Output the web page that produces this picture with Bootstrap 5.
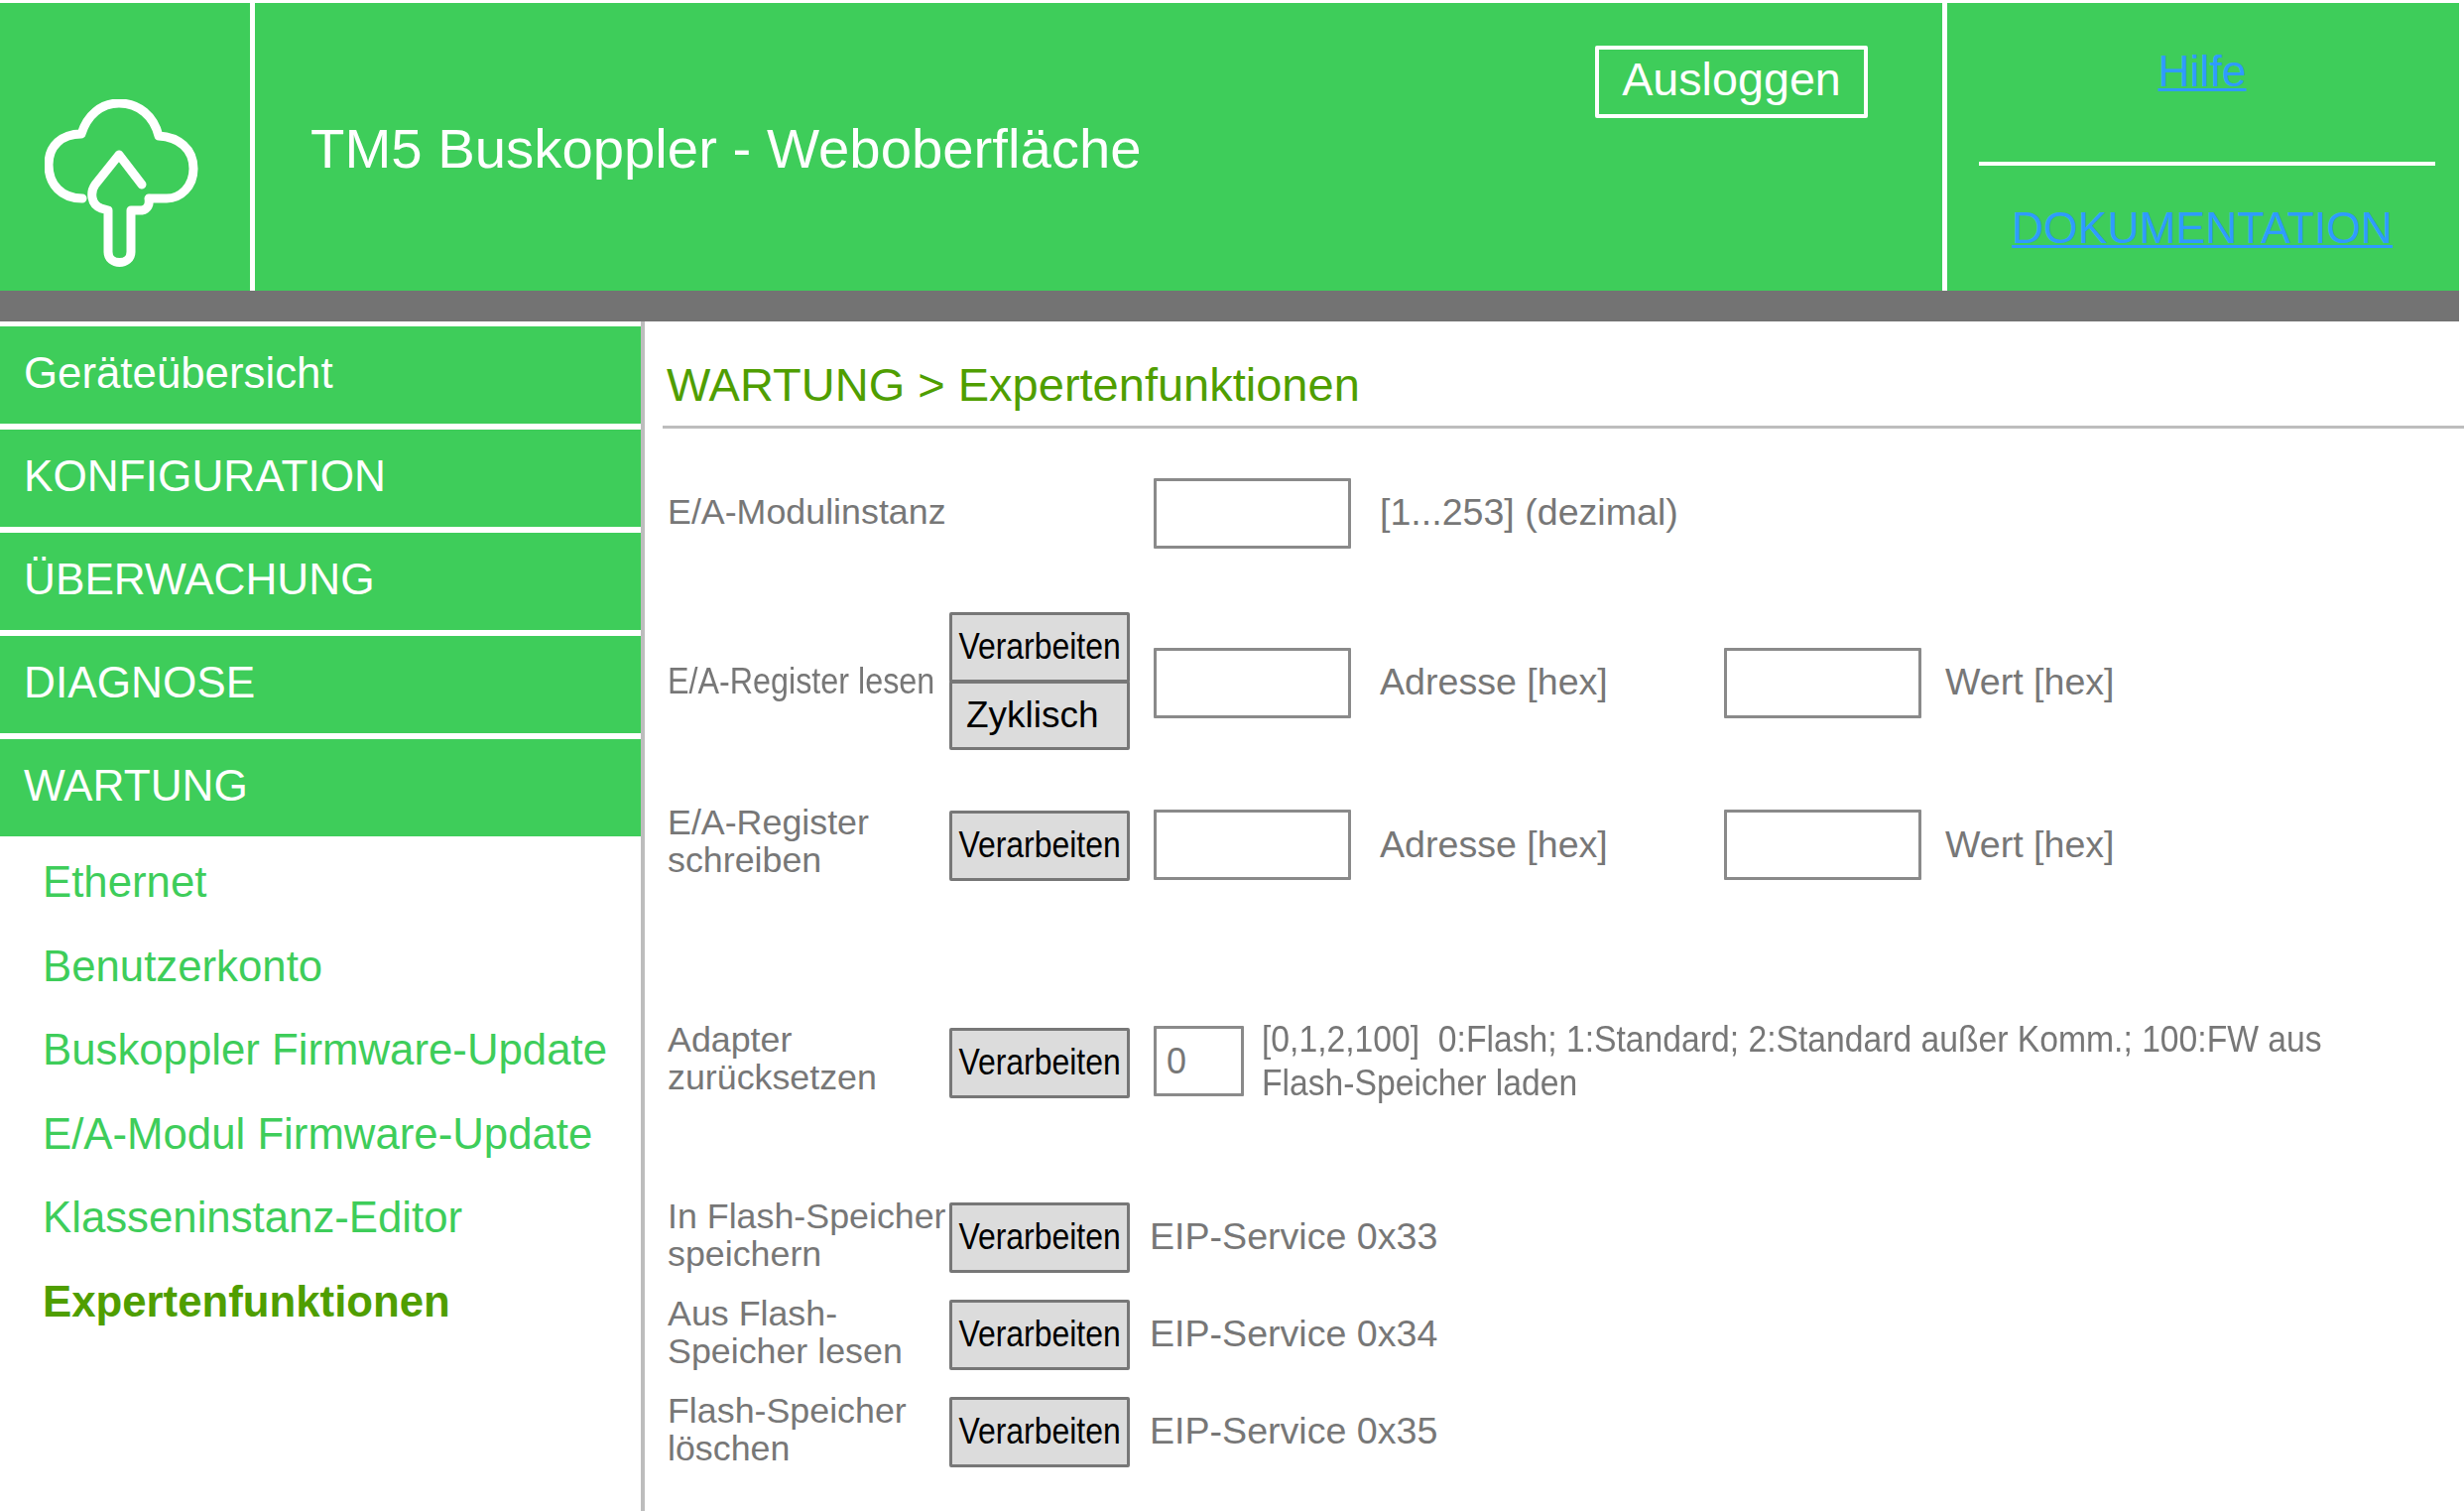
<!DOCTYPE html>
<html lang="de">
<head>
<meta charset="utf-8">
<title>TM5 Buskoppler - Weboberfläche</title>
<link href="https://cdn.jsdelivr.net/npm/bootstrap@5.3.0/dist/css/bootstrap.min.css" rel="stylesheet">
<style>
html,body{height:100%;}
body{font-family:"Liberation Sans",Arial,sans-serif;background:#fff;color:#777;overflow:hidden;}
.page-wrap{width:2484px;height:1523px;padding-top:3px;}
.top-head{height:290px;width:2479px;background:#3ecd5a;color:#fff;}
.logo-cell{width:252px;height:100%;padding:97px 0 0 45px;}
.logo-svg{filter:blur(.7px);}
.v-sep{width:5px;height:100%;background:#fff;}
.title-cell{width:1701px;height:100%;position:relative;}
.head-title{font-size:56.3px;line-height:64px;margin:115px 0 0 56px;font-weight:400;}
.logout-btn{position:absolute;left:1351px;top:43px;width:275px;height:73px;border:4px solid #fff;border-radius:2px;color:#fff;font-size:46.7px;line-height:60px;padding:0;}
.logout-btn:hover{color:#fff;border-color:#fff;}
.help-cell{flex:1;height:100%;padding:0 24px 0 32px;text-align:center;}
.help-cell a{color:#2f9bff;font-size:44.5px;line-height:50px;text-decoration-thickness:3px;}
.help-a{height:160px;padding:44px 10px 0 0;}
.help-b{border-top:4px solid #fff;padding:38px 10px 0 0;}
.grey-bar{height:31px;width:2479px;background:#737373;}
.body-wrap{height:1199px;}
.side-col{width:650px;border-right:4px solid #bdbdbd;padding-top:5px;height:100%;}
.side-item{display:block;height:98px;margin-bottom:6px;background:#3ecd5a;color:#fff;font-size:44.2px;line-height:94px;padding-left:24px;text-decoration:none;}
.side-mixed{font-size:43.8px;}
.side-sub{list-style:none;margin:-2px 0 0;padding:0;}
.side-sub a{display:block;height:84.6px;line-height:84.6px;padding-left:43px;color:#3ecd5a;font-size:43.75px;text-decoration:none;}
.side-sub a.on{color:#4f9e00;font-weight:700;}
.main-col{flex:1;padding-left:18px;height:100%;}
.main-head{height:108px;border-bottom:3px solid #bdbdbd;color:#4f9e00;font-size:47px;line-height:56px;padding:36px 0 0 4px;font-weight:400;margin:0;}
.form-line{padding-left:5px;height:71px;}
.form-tall{height:139px;}
.m-a{margin-top:50px;}.m-b{margin-top:64px;}.m-c{margin-top:61px;}.m-d{margin-top:148px;}.m-e{margin-top:105px;}.m-f{margin-top:27px;}
.lbl{width:284px;flex:none;font-size:35.8px;line-height:38px;color:#777;margin:0;}
.lbl-up{margin-top:-3px;}
.lbl-up-lg{margin-top:-10px;}
.lbl-up-md{margin-top:-6px;}
.narrow-lbl{display:inline-block;white-space:nowrap;font-size:36px;transform:scaleX(.897);transform-origin:left center;}
.act-col{width:182px;flex:none;}
.act-btn{display:block;width:182px;height:71px;padding:0;background:#dcdcdc;border:3px solid #777;border-radius:2px;color:#000;font-size:37.6px;line-height:62px;white-space:nowrap;}
.act-btn:hover{background:#dcdcdc;border-color:#777;color:#000;}
.act-text{display:block;width:192px;margin-left:-8px;text-align:center;transform:translateY(-2px) scaleX(.85);}
.act-btn.stack-b{height:70px;margin-top:-2px;text-align:left;padding-left:14px;font-size:37px;}
.field{width:199px;height:71px;flex:none;border:3px solid #8a8a8a;border-radius:1px;background:#fff;margin-left:24px;color:#777;font-size:36px;padding:0 10px;outline:none;}
.field-nudge{margin-top:4px;}
.field-up{margin-top:-2px;}
.field-up-lg{margin-top:-4px;}
.field-sm{width:91px;}
.hint{font-size:37.6px;line-height:40px;margin-left:29px;color:#777;flex:none;}
.hint-up{margin-top:-4px;}
.hint-addr{width:347px;}
.field-w{margin-left:0;}
.hint-w{margin-left:24px;}
.hint-long{line-height:44px;margin-left:18px;margin-top:-6px;width:1205px;transform:scaleX(.896);transform-origin:left center;}
.hint-eip{margin-left:20px;}
</style>
</head>
<body>
<div class="page-wrap">
  <header class="top-head d-flex">
    <div class="logo-cell">
      <svg class="logo-svg" width="156" height="172" viewBox="45 100 156 172" fill="none" stroke="#fff" stroke-width="9" stroke-linecap="round" stroke-linejoin="round" aria-hidden="true">
        <path d="M83 200 C62 200 49 186 49 166 C49 147 62 135 82 135 C88 116 102 104 120 104 C140 104 155 117 160 137 C180 138 195 150 195 170 C195 188 182 200 168 200 L152 200"/>
        <path d="M143 186 L120 156 L96 186 C91 193 91 206 102 210 L109 212 L109 254 C109 268 132 268 132 254 L132 212 L143 212 C149 211 151 206 150 200"/>
      </svg>
    </div>
    <div class="v-sep"></div>
    <div class="title-cell">
      <h1 class="head-title">TM5 Buskoppler - Weboberfläche</h1>
      <a class="btn logout-btn" href="#">Ausloggen</a>
    </div>
    <div class="v-sep"></div>
    <div class="help-cell">
      <div class="help-a"><a href="#">Hilfe</a></div>
      <div class="help-b"><a href="#">DOKUMENTATION</a></div>
    </div>
  </header>
  <div class="grey-bar"></div>
  <div class="body-wrap d-flex">
    <nav class="side-col">
      <a class="side-item side-mixed" href="#">Geräteübersicht</a>
      <a class="side-item" href="#">KONFIGURATION</a>
      <a class="side-item" href="#">ÜBERWACHUNG</a>
      <a class="side-item" href="#">DIAGNOSE</a>
      <a class="side-item" href="#">WARTUNG</a>
      <ul class="side-sub">
        <li><a href="#">Ethernet</a></li>
        <li><a href="#">Benutzerkonto</a></li>
        <li><a href="#">Buskoppler Firmware-Update</a></li>
        <li><a href="#">E/A-Modul Firmware-Update</a></li>
        <li><a href="#">Klasseninstanz-Editor</a></li>
        <li><a class="on" href="#">Expertenfunktionen</a></li>
      </ul>
    </nav>
    <main class="main-col">
      <h2 class="main-head">WARTUNG &gt; Expertenfunktionen</h2>
      <div class="form-line d-flex align-items-center m-a">
        <p class="lbl lbl-up">E/A-Modulinstanz</p><div class="act-col"></div>
        <input class="field" type="text" aria-label="E/A-Modulinstanz">
        <span class="hint lbl-up">[1...253] (dezimal)</span>
      </div>
      <div class="form-line form-tall d-flex align-items-center m-b">
        <p class="lbl"><span class="narrow-lbl">E/A-Register lesen</span></p>
        <div class="act-col"><button class="btn act-btn" type="button"><span class="act-text">Verarbeiten</span></button><button class="btn act-btn stack-b" type="button">Zyklisch</button></div>
        <input class="field field-nudge" type="text" aria-label="Adresse">
        <span class="hint hint-addr">Adresse [hex]</span>
        <input class="field field-w field-nudge" type="text" aria-label="Wert">
        <span class="hint hint-w">Wert [hex]</span>
      </div>
      <div class="form-line d-flex align-items-center m-c">
        <p class="lbl lbl-up-lg">E/A-Register<br>schreiben</p>
        <div class="act-col"><button class="btn act-btn" type="button"><span class="act-text">Verarbeiten</span></button></div>
        <input class="field field-up" type="text" aria-label="Adresse">
        <span class="hint hint-addr hint-up">Adresse [hex]</span>
        <input class="field field-w field-up" type="text" aria-label="Wert">
        <span class="hint hint-w hint-up">Wert [hex]</span>
      </div>
      <div class="form-line d-flex align-items-center m-d">
        <p class="lbl lbl-up-lg">Adapter<br>zurücksetzen</p>
        <div class="act-col"><button class="btn act-btn" type="button"><span class="act-text">Verarbeiten</span></button></div>
        <input class="field field-sm field-up-lg" type="text" value="0" aria-label="Adapter">
        <span class="hint hint-long">[0,1,2,100]&nbsp; 0:Flash; 1:Standard; 2:Standard außer Komm.; 100:FW aus Flash-Speicher laden</span>
      </div>
      <div class="form-line d-flex align-items-center m-e">
        <p class="lbl lbl-up-md">In Flash-Speicher<br>speichern</p>
        <div class="act-col"><button class="btn act-btn" type="button"><span class="act-text">Verarbeiten</span></button></div>
        <span class="hint hint-eip hint-up">EIP-Service 0x33</span>
      </div>
      <div class="form-line d-flex align-items-center m-f">
        <p class="lbl lbl-up-md">Aus Flash-<br>Speicher lesen</p>
        <div class="act-col"><button class="btn act-btn" type="button"><span class="act-text">Verarbeiten</span></button></div>
        <span class="hint hint-eip hint-up">EIP-Service 0x34</span>
      </div>
      <div class="form-line d-flex align-items-center m-f">
        <p class="lbl lbl-up-md">Flash-Speicher<br>löschen</p>
        <div class="act-col"><button class="btn act-btn" type="button"><span class="act-text">Verarbeiten</span></button></div>
        <span class="hint hint-eip hint-up">EIP-Service 0x35</span>
      </div>
    </main>
  </div>
</div>
<script src="https://cdn.jsdelivr.net/npm/bootstrap@5.3.0/dist/js/bootstrap.bundle.min.js"></script>
</body>
</html>
